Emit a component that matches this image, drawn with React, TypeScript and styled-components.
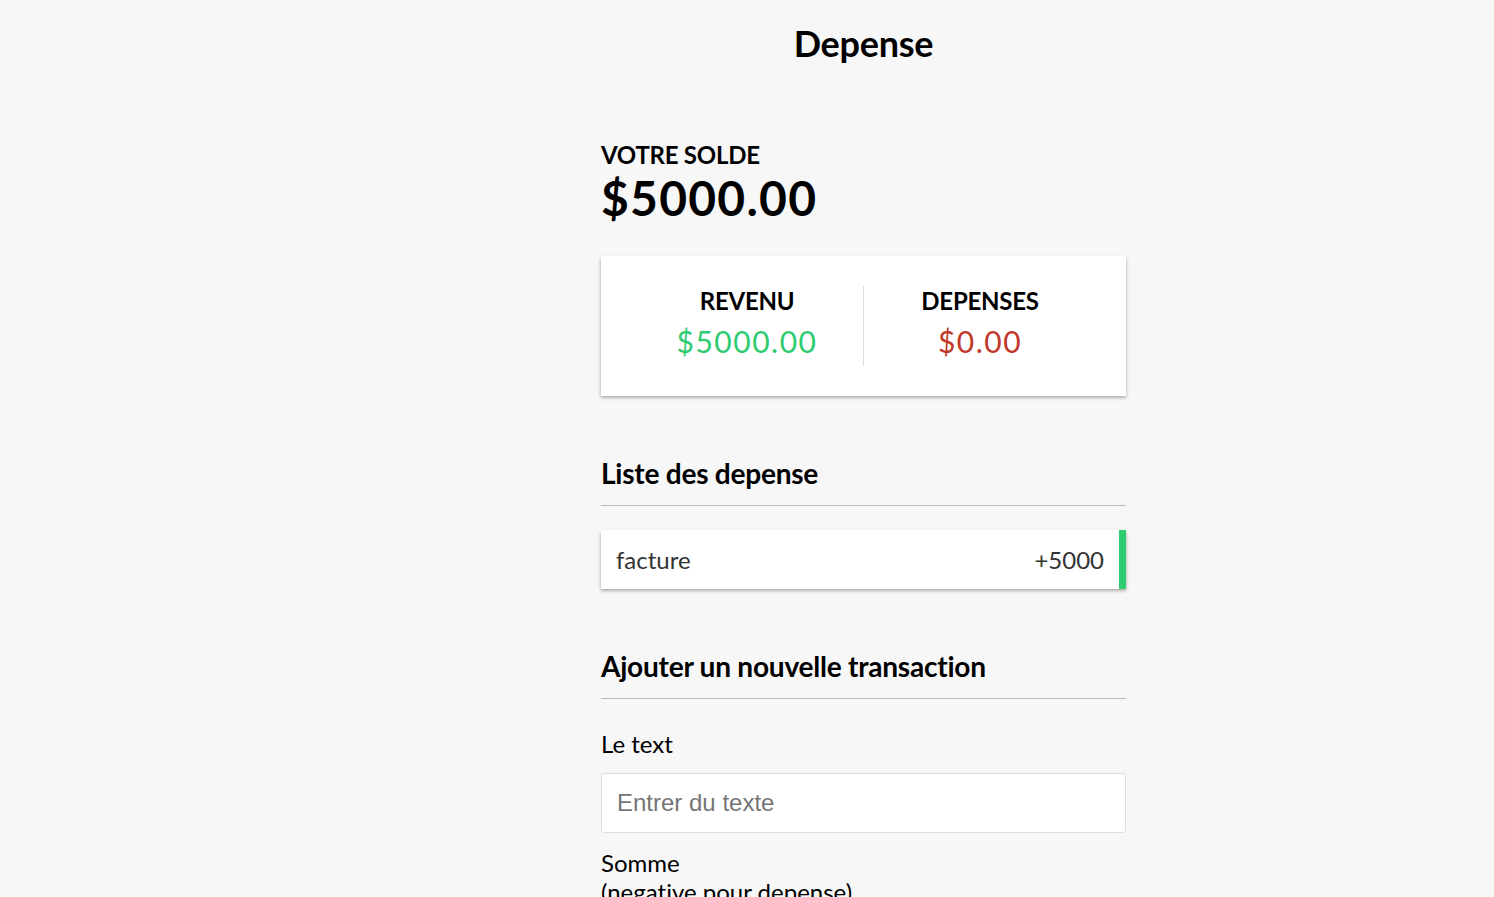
import React from "react";
import styled, { createGlobalStyle } from "styled-components";

const GlobalStyle = createGlobalStyle`
  * { box-sizing: border-box; }
  html, body { margin: 0; padding: 0; }
  body {
    background-color: #f7f7f7;
    font-family: Lato, "Open Sans", sans-serif;
    font-size: 24px;
    color: #000;
    font-variant-ligatures: none;
  }
`;

const shadow = "0 1.5px 4.5px rgba(0, 0, 0, 0.12), 0 1.5px 3px rgba(0, 0, 0, 0.24)";

const Page = styled.div`
  padding: 21px 0 40px 601px;
`;

const Column = styled.div`
  width: 525px;
  display: flex;
  flex-direction: column;
`;

const Title = styled.h2`
  font-size: 36px;
  font-weight: 700;
  text-align: center;
  letter-spacing: -0.25px;
  margin: 0 0 75px;
`;

const Caption = styled.h4`
  margin: 0;
  font-size: 24px;
  font-weight: 700;
  letter-spacing: -0.25px;
  text-transform: uppercase;
`;

const Balance = styled.h1`
  margin: 0;
  font-size: 48px;
  font-weight: 700;
  letter-spacing: 1.25px;
`;

const Summary = styled.div`
  background-color: #fff;
  box-shadow: ${shadow};
  padding: 30px;
  display: flex;
  justify-content: space-between;
  margin: 30px 0 60px;
`;

const SummaryCell = styled.div<{ $divider?: boolean }>`
  flex: 1;
  text-align: center;
  border-right: ${(p) => (p.$divider ? "1.5px solid #dedede" : "none")};
`;

const Money = styled.p<{ $kind: "plus" | "minus" }>`
  font-size: 30px;
  letter-spacing: 1.5px;
  margin: 7.5px 0;
  color: ${(p) => (p.$kind === "plus" ? "#2ecc71" : "#c0392b")};
`;

const SectionTitle = styled.h3`
  font-size: 28.08px;
  font-weight: 700;
  letter-spacing: -0.25px;
  border-bottom: 1.5px solid #bbb;
  padding-bottom: 15px;
  margin: 0;
`;

const List = styled.ul`
  list-style-type: none;
  padding: 0;
  margin: 24px 0 60px;
`;

const Item = styled.li<{ $kind: "plus" | "minus" }>`
  background-color: #fff;
  box-shadow: ${shadow};
  color: #333;
  display: flex;
  justify-content: space-between;
  position: relative;
  padding: 15px;
  border-right: 7.5px solid ${(p) => (p.$kind === "plus" ? "#2ecc71" : "#c0392b")};
`;

const Form = styled.form`
  padding-top: 15px;
`;

const FormControl = styled.div``;

const Label = styled.label`
  display: inline-block;
  margin: 15px 0;
`;

const Input = styled.input`
  border: 1.5px solid #dedede;
  border-radius: 3px;
  display: block;
  font-family: "Liberation Sans", Arial, sans-serif;
  font-size: 24px;
  padding: 15px;
  width: 100%;
  background: #fff;
  outline: none;
  &::placeholder { color: #757575; }
`;

const Button = styled.button`
  cursor: pointer;
  background-color: #9c88ff;
  box-shadow: ${shadow};
  color: #fff;
  border: 0;
  display: block;
  font-size: 24px;
  font-family: Lato, sans-serif;
  margin: 15px 0 45px;
  padding: 15px;
  width: 100%;
`;

export default function App() {
  return (
    <>
      <GlobalStyle />
      <Page>
        <Column>
          <Title>Depense</Title>
          <Caption>Votre solde</Caption>
          <Balance>$5000.00</Balance>
          <Summary>
            <SummaryCell $divider>
              <Caption>Revenu</Caption>
              <Money $kind="plus">$5000.00</Money>
            </SummaryCell>
            <SummaryCell>
              <Caption>Depenses</Caption>
              <Money $kind="minus">$0.00</Money>
            </SummaryCell>
          </Summary>
          <SectionTitle>Liste des depense</SectionTitle>
          <List>
            <Item $kind="plus">
              facture <span>+5000</span>
            </Item>
          </List>
          <SectionTitle>Ajouter un nouvelle transaction</SectionTitle>
          <Form onSubmit={(e) => e.preventDefault()}>
            <FormControl>
              <Label htmlFor="text">Le text</Label>
              <Input type="text" id="text" placeholder="Entrer du texte" />
            </FormControl>
            <FormControl>
              <Label htmlFor="amount">
                Somme <br />
                (negative pour depense)
              </Label>
              <Input type="number" id="amount" placeholder="Entrer la somme" />
            </FormControl>
            <Button type="submit">Ajouter transaction</Button>
          </Form>
        </Column>
      </Page>
    </>
  );
}
